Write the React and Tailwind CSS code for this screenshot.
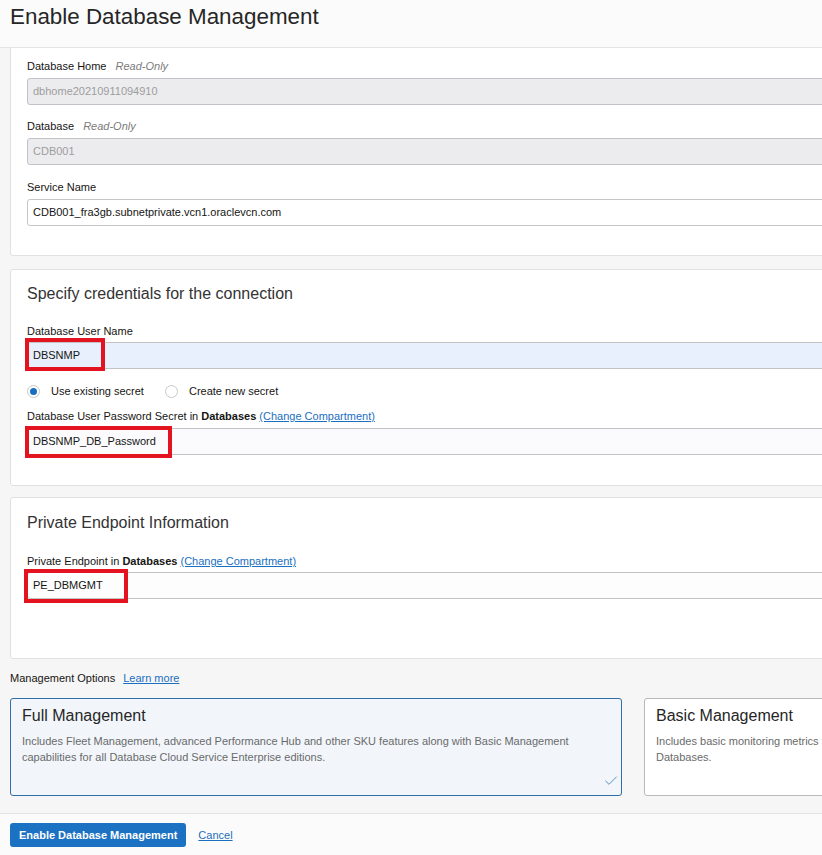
import { Check } from "lucide-react";

const font = { fontFamily: '"Liberation Sans", Arial, sans-serif' };

function Label({ children, className = "" }) {
  return <div className={"h-[16px] text-[11px] leading-[16px] text-[#161513] whitespace-nowrap " + className}>{children}</div>;
}

function Field({ value, className = "", mark }) {
  return (
    <div className={"relative h-[27px] rounded-[3px] border px-[5px] text-[11px] leading-[25px] whitespace-nowrap " + className}>
      {value}
      {mark}
    </div>
  );
}

function RedBox({ className }) {
  return <div className={"pointer-events-none absolute border-[4px] border-[#e3141f] " + className} />;
}

function Radio({ checked, label }) {
  return (
    <div className="flex items-center">
      <span className="flex h-[13px] w-[13px] items-center justify-center rounded-full border border-[#c8c8c8] bg-white">
        {checked ? <span className="h-[7px] w-[7px] rounded-full bg-[#1a6ec0]" /> : null}
      </span>
      <span className="ml-[11px] text-[11px] text-[#161513]">{label}</span>
    </div>
  );
}

function Link({ children, className = "" }) {
  return <span className={"text-[#1b6fbf] underline " + className}>{children}</span>;
}

export default function App() {
  return (
    <div className="flex h-[855px] w-[822px] flex-col overflow-hidden bg-[#f6f6f6]" style={font}>
      <div className="h-[48px] shrink-0 border-b border-[#e4e4e4] bg-[#fbfbfb] pl-[10px] pt-[4px]">
        <h1 className="text-[22.4px] leading-[25px] text-[#262626]">Enable Database Management</h1>
      </div>

      <div className="flex-1 pl-[10px]">
        <div className="w-[900px] rounded-b-[3px] border border-t-0 border-[#e1e1e1] bg-white pb-[29px] pl-[16px] pr-[16px] pt-[10px]">
          <Label>
            Database Home <span className="ml-[6px] italic text-[#7b7b7b]">Read-Only</span>
          </Label>
          <Field value="dbhome20210911094910" className="mt-[4px] border-[#c3c2c8] bg-[#ececef] text-[#9d9d9d]" />
          <Label className="mt-[13px]">
            Database <span className="ml-[6px] italic text-[#7b7b7b]">Read-Only</span>
          </Label>
          <Field value="CDB001" className="mt-[4px] border-[#c3c2c8] bg-[#ececef] text-[#9d9d9d]" />
          <Label className="mt-[14px]">Service Name</Label>
          <Field value="CDB001_fra3gb.subnetprivate.vcn1.oraclevcn.com" className="mt-[4px] border-[#c6c6c6] bg-white text-[#161513]" />
        </div>

        <div className="mt-[13px] w-[900px] rounded-[3px] border border-[#e1e1e1] bg-white pb-[30px] pl-[16px] pr-[16px] pt-[14px]">
          <h2 className="text-[16px] leading-[20px] text-[#333]">Specify credentials for the connection</h2>
          <Label className="mt-[19px]">Database User Name</Label>
          <Field
            value="DBSNMP"
            className="mt-[3px] border-[#c3c3c3] bg-[#e8f0fd] text-[#161513]"
            mark={<RedBox className="left-[-3px] top-[-5px] h-[33px] w-[80px]" />}
          />
          <div className="mt-[14px] flex h-[16px] items-center">
            <Radio checked label="Use existing secret" />
            <div className="ml-[21px]">
              <Radio label="Create new secret" />
            </div>
          </div>
          <Label className="mt-[9px]">
            Database User Password Secret in <b>Databases</b> <Link>(Change Compartment)</Link>
          </Label>
          <Field
            value="DBSNMP_DB_Password"
            className="mt-[4px] border-[#c3c3c3] bg-[#fbfbfe] text-[#161513]"
            mark={<RedBox className="left-[-3px] top-[-3px] h-[32px] w-[147px]" />}
          />
        </div>

        <div className="mt-[11px] w-[900px] rounded-[3px] border border-[#e1e1e1] bg-white pb-[59px] pl-[16px] pr-[16px] pt-[15px]">
          <h2 className="text-[16px] leading-[20px] text-[#333]">Private Endpoint Information</h2>
          <Label className="mt-[20px]">
            Private Endpoint in <b>Databases</b> <Link>(Change Compartment)</Link>
          </Label>
          <Field
            value="PE_DBMGMT"
            className="mt-[3px] border-[#c3c3c3] bg-[#fdfdfd] text-[#161513]"
            mark={<RedBox className="left-[-4px] top-[-4px] h-[34px] w-[104px]" />}
          />
        </div>

        <div className="mt-[11px] flex h-[16px] items-center text-[11px] leading-[16px] text-[#161513]">
          Management Options <Link className="ml-[8px]">Learn more</Link>
        </div>

        <div className="mt-[12px] flex w-[1300px]">
          <div className="relative h-[98px] w-[612px] shrink-0 rounded-[3px] border border-[#2f6ea6] bg-[#f2f6fb] px-[11px] pt-[7px]">
            <h3 className="text-[16px] leading-[20px] text-[#262626]">Full Management</h3>
            <p className="mt-[7px] text-[11px] leading-[16px] text-[#6a6a6a]">
              Includes Fleet Management, advanced Performance Hub and other SKU features along with Basic Management
              <br />
              capabilities for all Database Cloud Service Enterprise editions.
            </p>
            <Check className="absolute bottom-[6px] right-[2px] h-[16px] w-[16px] text-[#4f87bd]" strokeWidth={1.4} />
          </div>
          <div className="ml-[22px] h-[98px] w-[612px] shrink-0 rounded-[3px] border border-[#b9b9b9] bg-white px-[11px] pt-[7px]">
            <h3 className="text-[16px] leading-[20px] text-[#262626]">Basic Management</h3>
            <p className="mt-[7px] whitespace-nowrap text-[11px] leading-[16px] text-[#6a6a6a]">
              Includes basic monitoring metrics for Database Cloud Service Enterprise and Standard editions of
              <br />
              Databases.
            </p>
          </div>
        </div>
      </div>

      <div className="flex h-[42px] shrink-0 items-start border-t border-[#e2e2e2] bg-[#fbfbfb] pl-[10px] pt-[9px]">
        <button className="h-[24px] rounded-[3px] bg-[#1c72c2] px-[9px] text-[11px] font-bold leading-[24px] text-white">
          Enable Database Management
        </button>
        <Link className="ml-[12px] text-[11px] leading-[24px]">Cancel</Link>
      </div>
    </div>
  );
}
